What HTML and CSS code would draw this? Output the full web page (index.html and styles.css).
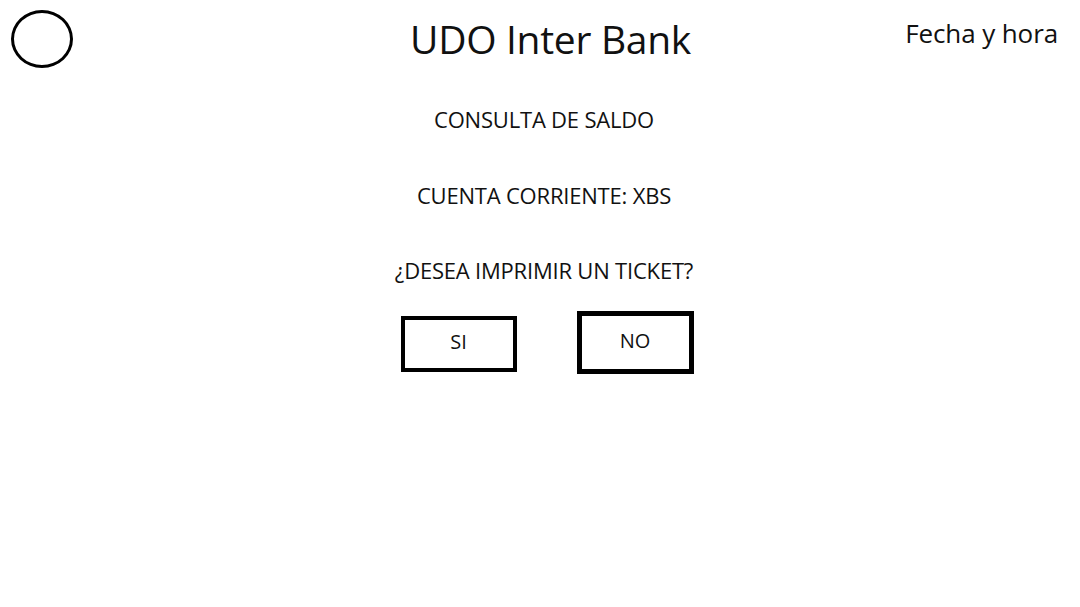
FILE: index.html
```html
<!DOCTYPE html>
<html lang="es">
<head>
<meta charset="utf-8">
<title>UDO Inter Bank</title>
<link rel="stylesheet" href="styles.css">
</head>
<body>
<div class="screen">
  <header class="header">
    <div class="logo"></div>
    <h1 class="title">UDO Inter Bank</h1>
    <div class="datetime">Fecha y hora</div>
  </header>
  <main class="content">
    <p class="line line-1">CONSULTA DE SALDO</p>
    <p class="line line-2">CUENTA CORRIENTE: XBS</p>
    <p class="line line-3">¿DESEA IMPRIMIR UN TICKET?</p>
    <div class="actions">
      <button class="btn btn-si">SI</button>
      <button class="btn btn-no">NO</button>
    </div>
  </main>
</div>
</body>
</html>
```
FILE: styles.css
```css
* { box-sizing: border-box; }
html, body { margin: 0; padding: 0; background: #fff; }
body {
  width: 1080px;
  height: 607px;
  overflow: hidden;
  font-family: "Open Sans", "Noto Sans", sans-serif;
  color: #111;
}
.screen { width: 1080px; height: 607px; }
.header {
  height: 80px;
  display: grid;
  grid-template-columns: 1fr auto 1fr;
  align-items: start;
  padding: 10px 22px 0 11px;
}
.logo {
  width: 62px;
  height: 58px;
  border: 3px solid #000;
  border-radius: 50%;
}
.title {
  margin: 4px 0 0 0;
  padding-left: 32px;
  text-align: center;
  font-weight: 400;
  font-size: 39px;
  line-height: 50px;
  letter-spacing: -0.3px;
}
.datetime {
  justify-self: end;
  margin-top: 6px;
  font-size: 26px;
  line-height: 34px;
  letter-spacing: -0.1px;
}
.content {
  display: flex;
  flex-direction: column;
  align-items: center;
  padding-left: 8px;
}
.line {
  margin: 0;
  font-size: 22px;
  line-height: 28px;
  letter-spacing: -0.2px;
}
.line-1 { margin-top: 25px; }
.line-2 { margin-top: 48px; }
.line-3 { margin-top: 47px; }
.actions {
  display: flex;
  align-items: center;
  gap: 60px;
  margin-top: 27px;
  padding-left: 6px;
}
.btn {
  background: #fff;
  font-family: inherit;
  color: #111;
  font-size: 20px;
  padding: 0 0 5px 0;
  border-style: solid;
  border-color: #000;
}
.btn-si {
  width: 116px;
  height: 56px;
  border-width: 4px;
  margin-top: 2px;
}
.btn-no {
  width: 117px;
  height: 63px;
  border-width: 5px;
}
```
